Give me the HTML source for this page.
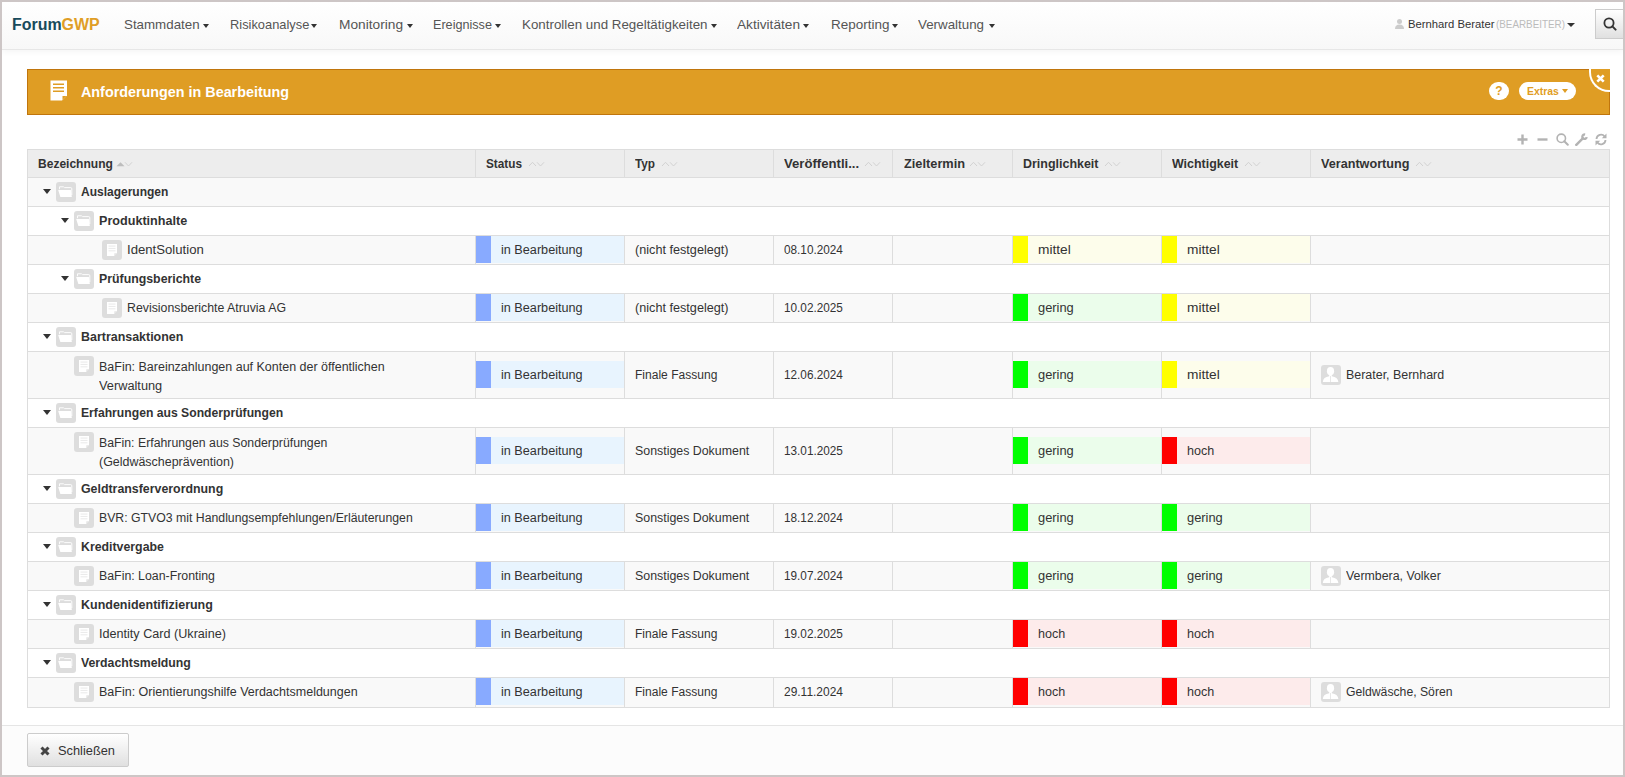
<!DOCTYPE html>
<html><head><meta charset="utf-8">
<style>
*{box-sizing:border-box}
html,body{margin:0;padding:0}
body{width:1625px;height:777px;overflow:hidden;background:#cdc6c6;font-family:"Liberation Sans",sans-serif;color:#333;position:relative}
.win{position:absolute;left:2px;top:2px;width:1621px;height:773px;background:#fff;overflow:hidden}
.abs{position:absolute}
.txt,.mn,.hd{position:absolute;white-space:nowrap;transform-origin:0 0}
.txt{font-size:12px;line-height:19px;color:#333}
.hd{font-size:12px;line-height:19px;color:#333;font-weight:bold}
.mn{font-size:12.7px;line-height:16px;color:#555}
.ibox{position:absolute;width:20px;height:20px;background:#ddd;border-radius:3px}
.tri{position:absolute;width:0;height:0;border-top:5px solid #333;border-left:4px solid transparent;border-right:4px solid transparent}
</style></head><body><div class="win">

<div class="abs" style="left:0;top:0;width:1621px;height:48px;background:linear-gradient(#fff,#f8f8f8);border-bottom:1px solid #e7e7e7;box-shadow:0 2px 6px rgba(0,0,0,.045)"></div>
<div id="t1" class="txt" style="left:10px;top:12.5px;transform:scaleX(0.9495);font-size:16.8px;line-height:20px;font-weight:bold"><span style="color:#184a5b">Forum</span><span style="color:#e09e26">GWP</span></div>
<div id="t2" class="mn" style="left:121.9px;top:15px;transform:scaleX(1.0507);">Stammdaten</div>
<div class="abs" style="left:201px;top:22px;width:0;height:0;border-top:4px solid #333;border-left:3.5px solid transparent;border-right:3.5px solid transparent"></div>
<div id="t3" class="mn" style="left:227.9px;top:15px;transform:scaleX(1.0130);">Risikoanalyse</div>
<div class="abs" style="left:309px;top:22px;width:0;height:0;border-top:4px solid #333;border-left:3.5px solid transparent;border-right:3.5px solid transparent"></div>
<div id="t4" class="mn" style="left:337.3px;top:15px;transform:scaleX(1.0810);">Monitoring</div>
<div class="abs" style="left:405px;top:22px;width:0;height:0;border-top:4px solid #333;border-left:3.5px solid transparent;border-right:3.5px solid transparent"></div>
<div id="t5" class="mn" style="left:431.4px;top:15px;transform:scaleX(0.9948);">Ereignisse</div>
<div class="abs" style="left:493px;top:22px;width:0;height:0;border-top:4px solid #333;border-left:3.5px solid transparent;border-right:3.5px solid transparent"></div>
<div id="t6" class="mn" style="left:520.4px;top:15px;transform:scaleX(1.0520);">Kontrollen und Regeltätigkeiten</div>
<div class="abs" style="left:709px;top:22px;width:0;height:0;border-top:4px solid #333;border-left:3.5px solid transparent;border-right:3.5px solid transparent"></div>
<div id="t7" class="mn" style="left:735.3px;top:15px;transform:scaleX(1.0759);">Aktivitäten</div>
<div class="abs" style="left:801px;top:22px;width:0;height:0;border-top:4px solid #333;border-left:3.5px solid transparent;border-right:3.5px solid transparent"></div>
<div id="t8" class="mn" style="left:828.7px;top:15px;transform:scaleX(1.0611);">Reporting</div>
<div class="abs" style="left:890px;top:22px;width:0;height:0;border-top:4px solid #333;border-left:3.5px solid transparent;border-right:3.5px solid transparent"></div>
<div id="t9" class="mn" style="left:916.3px;top:15px;transform:scaleX(1.0508);">Verwaltung</div>
<div class="abs" style="left:987px;top:22px;width:0;height:0;border-top:4px solid #333;border-left:3.5px solid transparent;border-right:3.5px solid transparent"></div>
<svg class="abs" style="left:1393px;top:17px" width="9" height="10" viewBox="0 0 9 10"><circle cx="4.5" cy="2.6" r="2.5" fill="#ccc"/><path d="M0 10 Q0 5.5 4.5 5.5 Q9 5.5 9 10 Z" fill="#ccc"/></svg>
<div id="t10" class="txt" style="left:1405.5px;top:14px;transform:scaleX(1.0071);font-size:11.2px;line-height:16px">Bernhard Berater</div>
<div id="t11" class="txt" style="left:1493.5px;top:14px;transform:scaleX(0.8810);font-size:11.2px;line-height:16px;color:#bbb">(BEARBEITER)</div>
<div class="abs" style="left:1565px;top:21px;width:0;height:0;border-top:4px solid #333;border-left:4.0px solid transparent;border-right:4.0px solid transparent"></div>
<div class="abs" style="left:1593px;top:7px;width:34px;height:30px;border:1px solid #ccc;border-radius:0;background:linear-gradient(#fff,#e0e0e0)"><svg style="position:absolute;left:7px;top:7px" width="14" height="14" viewBox="0 0 14 14"><circle cx="6" cy="6" r="4.6" stroke="#333" stroke-width="1.8" fill="none"/><path d="M9.4 9.4 L12.6 12.6" stroke="#333" stroke-width="2" stroke-linecap="round"/></svg></div>
<div class="abs" style="left:25px;top:67px;width:1583px;height:46px;background:#df9d24;border:1px solid #c0750c"></div>
<svg class="abs" style="left:48px;top:78px" width="18" height="21" viewBox="0 0 18 21"><path d="M0.5 0.5 H17 V15.5 L12 20.5 H0.5 Z" fill="#fff"/><rect x="3" y="3.5" width="11" height="1.5" fill="#df9d24"/><rect x="3" y="7" width="11" height="1.5" fill="#df9d24"/><rect x="3" y="10.5" width="11" height="1.5" fill="#df9d24"/><path d="M12.5 20 L12.5 16 L16.5 16 Z" fill="#df9d24"/></svg>
<div id="t12" class="txt" style="left:79px;top:81px;transform:scaleX(0.9562);font-size:15px;line-height:18px;font-weight:bold;color:#fff">Anforderungen in Bearbeitung</div>
<div class="abs" style="left:1487px;top:80px;width:20px;height:18px;border-radius:10px;background:#fff;color:#df9d24;font-weight:bold;font-size:12px;line-height:18px;text-align:center">?</div>
<div class="abs" style="left:1517px;top:80px;width:57px;height:18px;border-radius:9px;background:#fff"></div>
<div id="t13" class="txt" style="left:1525px;top:80px;transform:scaleX(0.8973);font-size:11.6px;line-height:18px;font-weight:bold;color:#df9d24">Extras</div>
<div class="abs" style="left:1560px;top:87px;width:0;height:0;border-top:4px solid #df9d24;border-left:3.5px solid transparent;border-right:3.5px solid transparent"></div>
<div class="abs" style="left:1587px;top:67px;width:21px;height:23px;background:#df9d24;border-left:2px solid #fff;border-bottom:2px solid #fff;border-bottom-left-radius:20px"><svg style="position:absolute;left:5.3px;top:4.5px" width="9" height="9" viewBox="0 0 9 9"><path d="M1.3 1.3 L7.7 7.7 M7.7 1.3 L1.3 7.7" stroke="#fff" stroke-width="2.6"/></svg></div>
<svg class="abs" style="left:1515px;top:132px" width="11" height="11" viewBox="0 0 11 11"><path d="M5.5 0.5 V10.5 M0.5 5.5 H10.5" stroke="#b3b3b3" stroke-width="2.4"/></svg>
<svg class="abs" style="left:1535px;top:132px" width="11" height="11" viewBox="0 0 11 11"><path d="M0.5 5.5 H10.5" stroke="#b3b3b3" stroke-width="2.4"/></svg>
<svg class="abs" style="left:1554px;top:131px" width="13" height="13" viewBox="0 0 13 13"><circle cx="5.3" cy="5.3" r="4.2" stroke="#b3b3b3" stroke-width="1.6" fill="none"/><path d="M8.3 8.3 L11.8 11.8" stroke="#b3b3b3" stroke-width="2" stroke-linecap="round"/></svg>
<svg class="abs" style="left:1573px;top:131px" width="13" height="13" viewBox="0 0 13 13"><path d="M7.8 5.3 L1.3 11.8" stroke="#b3b3b3" stroke-width="2.5" stroke-linecap="round"/><path d="M11.7 4.1 A2.2 2.2 0 1 1 10.1 1.6" stroke="#b3b3b3" stroke-width="2.3" fill="none"/></svg>
<svg class="abs" style="left:1593px;top:131px" width="12" height="13" viewBox="0 0 12 13"><path d="M1.5 6 A4.5 4.5 0 0 1 9.6 3.5" stroke="#b3b3b3" stroke-width="1.8" fill="none"/><path d="M11.5 0.5 V5.2 H6.8 Z" fill="#b3b3b3"/><path d="M10.5 7 A4.5 4.5 0 0 1 2.4 9.5" stroke="#b3b3b3" stroke-width="1.8" fill="none"/><path d="M0.5 12.5 V7.8 H5.2 Z" fill="#b3b3b3"/></svg>
<div class="abs" style="left:25px;top:147px;width:1583px;height:559px;border:1px solid #ddd;background:#fff"></div>
<div class="abs" style="left:26px;top:148px;width:1581px;height:28px;background:#ededed;border-bottom:1px solid #ddd"></div>
<div id="t14" class="hd" style="left:36.3px;top:153px;transform:scaleX(1.0027);">Bezeichnung</div>
<svg class="abs" style="left:114.3px;top:158.5px" width="17" height="6" viewBox="0 0 17 6"><path d="M0.5 5.3 L4.5 1.2 L8.5 5.3 Z" fill="#bdbdbd"/><path d="M9 1.3 L12.5 5 L16 1.3" stroke="#d2d2d2" stroke-width="1" fill="none"/></svg>
<div id="t15" class="hd" style="left:484.2px;top:153px;transform:scaleX(0.9811);">Status</div>
<svg class="abs" style="left:525.5px;top:158.5px" width="17" height="6" viewBox="0 0 17 6"><path d="M1 5 L4.5 1.3 L8 5" stroke="#d2d2d2" stroke-width="1" fill="none"/><path d="M9 1.3 L12.5 5 L16 1.3" stroke="#d2d2d2" stroke-width="1" fill="none"/></svg>
<div class="abs" style="left:473px;top:148px;width:1px;height:27px;background:#ddd"></div>
<div id="t16" class="hd" style="left:633.4px;top:153px;transform:scaleX(0.9810);">Typ</div>
<svg class="abs" style="left:659.0px;top:158.5px" width="17" height="6" viewBox="0 0 17 6"><path d="M1 5 L4.5 1.3 L8 5" stroke="#d2d2d2" stroke-width="1" fill="none"/><path d="M9 1.3 L12.5 5 L16 1.3" stroke="#d2d2d2" stroke-width="1" fill="none"/></svg>
<div class="abs" style="left:622px;top:148px;width:1px;height:27px;background:#ddd"></div>
<div id="t17" class="hd" style="left:781.7px;top:153px;transform:scaleX(1.0942);">Veröffentli...</div>
<svg class="abs" style="left:862.2px;top:158.5px" width="17" height="6" viewBox="0 0 17 6"><path d="M1 5 L4.5 1.3 L8 5" stroke="#d2d2d2" stroke-width="1" fill="none"/><path d="M9 1.3 L12.5 5 L16 1.3" stroke="#d2d2d2" stroke-width="1" fill="none"/></svg>
<div class="abs" style="left:771px;top:148px;width:1px;height:27px;background:#ddd"></div>
<div id="t18" class="hd" style="left:901.7px;top:153px;transform:scaleX(1.0649);">Zieltermin</div>
<svg class="abs" style="left:967.4px;top:158.5px" width="17" height="6" viewBox="0 0 17 6"><path d="M1 5 L4.5 1.3 L8 5" stroke="#d2d2d2" stroke-width="1" fill="none"/><path d="M9 1.3 L12.5 5 L16 1.3" stroke="#d2d2d2" stroke-width="1" fill="none"/></svg>
<div class="abs" style="left:890px;top:148px;width:1px;height:27px;background:#ddd"></div>
<div id="t19" class="hd" style="left:1021px;top:153px;transform:scaleX(1.0384);">Dringlichkeit</div>
<svg class="abs" style="left:1101.8px;top:158.5px" width="17" height="6" viewBox="0 0 17 6"><path d="M1 5 L4.5 1.3 L8 5" stroke="#d2d2d2" stroke-width="1" fill="none"/><path d="M9 1.3 L12.5 5 L16 1.3" stroke="#d2d2d2" stroke-width="1" fill="none"/></svg>
<div class="abs" style="left:1010px;top:148px;width:1px;height:27px;background:#ddd"></div>
<div id="t20" class="hd" style="left:1170.2px;top:153px;transform:scaleX(1.0359);">Wichtigkeit</div>
<svg class="abs" style="left:1241.5px;top:158.5px" width="17" height="6" viewBox="0 0 17 6"><path d="M1 5 L4.5 1.3 L8 5" stroke="#d2d2d2" stroke-width="1" fill="none"/><path d="M9 1.3 L12.5 5 L16 1.3" stroke="#d2d2d2" stroke-width="1" fill="none"/></svg>
<div class="abs" style="left:1159px;top:148px;width:1px;height:27px;background:#ddd"></div>
<div id="t21" class="hd" style="left:1319.2px;top:153px;transform:scaleX(1.0524);">Verantwortung</div>
<svg class="abs" style="left:1412.6px;top:158.5px" width="17" height="6" viewBox="0 0 17 6"><path d="M1 5 L4.5 1.3 L8 5" stroke="#d2d2d2" stroke-width="1" fill="none"/><path d="M9 1.3 L12.5 5 L16 1.3" stroke="#d2d2d2" stroke-width="1" fill="none"/></svg>
<div class="abs" style="left:1308px;top:148px;width:1px;height:27px;background:#ddd"></div>
<div class="abs" style="left:26px;top:176px;width:1581px;height:29px;background:#f9f9f9;border-bottom:1px solid #ddd"></div>
<div class="tri" style="left:41.2px;top:187px"></div>
<div class="ibox" style="left:54px;top:180px"><svg style="position:absolute;left:2px;top:4px" width="16" height="12" viewBox="0 0 16 12"><path d="M1.5 3.2 V0.8 H5.5 L6.5 1.6 H12.8 Q13.8 1.6 13.8 2.8 V9" stroke="#fff" stroke-width="0.9" fill="none"/><path d="M0.2 4 H12.9 L13.8 11 H2.4 Z" fill="#fff"/></svg></div>
<div id="t22" class="hd" style="left:79px;top:181px;">Auslagerungen</div>
<div class="abs" style="left:26px;top:205px;width:1581px;height:29px;background:#fff;border-bottom:1px solid #ddd"></div>
<div class="tri" style="left:59.2px;top:216px"></div>
<div class="ibox" style="left:72px;top:209px"><svg style="position:absolute;left:2px;top:4px" width="16" height="12" viewBox="0 0 16 12"><path d="M1.5 3.2 V0.8 H5.5 L6.5 1.6 H12.8 Q13.8 1.6 13.8 2.8 V9" stroke="#fff" stroke-width="0.9" fill="none"/><path d="M0.2 4 H12.9 L13.8 11 H2.4 Z" fill="#fff"/></svg></div>
<div id="t23" class="hd" style="left:97px;top:210px;transform:scaleX(1.0500);">Produktinhalte</div>
<div class="abs" style="left:26px;top:234px;width:1581px;height:29px;background:#f9f9f9;border-bottom:1px solid #ddd"></div>
<div class="ibox" style="left:100px;top:238px"><svg style="position:absolute;left:5px;top:4px" width="10" height="12" viewBox="0 0 10 12"><path d="M0 0 H10 V9 L7 12 H0 Z" fill="#fff"/><rect x="1.5" y="1.6" width="7" height="0.9" fill="#e6e6e6"/><rect x="1.5" y="3.9" width="7" height="0.9" fill="#e6e6e6"/><rect x="1.5" y="6.4" width="7" height="0.9" fill="#e6e6e6"/><path d="M7.3 12 L7.3 9.2 L10 9.2 Z" fill="#e4e4e4"/></svg></div>
<div id="t24" class="txt" style="left:125px;top:239px;transform:scaleX(1.0957);">IdentSolution</div>
<div class="abs" style="left:473px;top:234px;width:1px;height:28px;background:#ddd"></div>
<div class="abs" style="left:622px;top:234px;width:1px;height:28px;background:#ddd"></div>
<div class="abs" style="left:771px;top:234px;width:1px;height:28px;background:#ddd"></div>
<div class="abs" style="left:890px;top:234px;width:1px;height:28px;background:#ddd"></div>
<div class="abs" style="left:1010px;top:234px;width:1px;height:28px;background:#ddd"></div>
<div class="abs" style="left:1159px;top:234px;width:1px;height:28px;background:#ddd"></div>
<div class="abs" style="left:1308px;top:234px;width:1px;height:28px;background:#ddd"></div>
<div class="abs" style="left:474px;top:234px;width:148px;height:27px;background:#e8f4fe"></div>
<div class="abs" style="left:474px;top:234px;width:15px;height:27px;background:#88aaff"></div>
<div id="t25" class="txt" style="left:499px;top:239px;transform:scaleX(1.0545);">in Bearbeitung</div>
<div id="t26" class="txt" style="left:632.5px;top:239px;transform:scaleX(1.0545);">(nicht festgelegt)</div>
<div id="t27" class="txt" style="left:781.8px;top:239px;transform:scaleX(0.9800);">08.10.2024</div>
<div class="abs" style="left:1011px;top:234px;width:148px;height:27px;background:#fdfdeb"></div>
<div class="abs" style="left:1011px;top:234px;width:15px;height:27px;background:#ffff00"></div>
<div id="t28" class="txt" style="left:1036px;top:239px;transform:scaleX(1.1429);">mittel</div>
<div class="abs" style="left:1160px;top:234px;width:148px;height:27px;background:#fdfdeb"></div>
<div class="abs" style="left:1160px;top:234px;width:15px;height:27px;background:#ffff00"></div>
<div id="t29" class="txt" style="left:1185px;top:239px;transform:scaleX(1.1429);">mittel</div>
<div class="abs" style="left:26px;top:263px;width:1581px;height:29px;background:#fff;border-bottom:1px solid #ddd"></div>
<div class="tri" style="left:59.2px;top:274px"></div>
<div class="ibox" style="left:72px;top:267px"><svg style="position:absolute;left:2px;top:4px" width="16" height="12" viewBox="0 0 16 12"><path d="M1.5 3.2 V0.8 H5.5 L6.5 1.6 H12.8 Q13.8 1.6 13.8 2.8 V9" stroke="#fff" stroke-width="0.9" fill="none"/><path d="M0.2 4 H12.9 L13.8 11 H2.4 Z" fill="#fff"/></svg></div>
<div id="t30" class="hd" style="left:97px;top:268px;transform:scaleX(1.0273);">Prüfungsberichte</div>
<div class="abs" style="left:26px;top:292px;width:1581px;height:29px;background:#f9f9f9;border-bottom:1px solid #ddd"></div>
<div class="ibox" style="left:100px;top:296px"><svg style="position:absolute;left:5px;top:4px" width="10" height="12" viewBox="0 0 10 12"><path d="M0 0 H10 V9 L7 12 H0 Z" fill="#fff"/><rect x="1.5" y="1.6" width="7" height="0.9" fill="#e6e6e6"/><rect x="1.5" y="3.9" width="7" height="0.9" fill="#e6e6e6"/><rect x="1.5" y="6.4" width="7" height="0.9" fill="#e6e6e6"/><path d="M7.3 12 L7.3 9.2 L10 9.2 Z" fill="#e4e4e4"/></svg></div>
<div id="t31" class="txt" style="left:125px;top:297px;transform:scaleX(1.0273);">Revisionsberichte Atruvia AG</div>
<div class="abs" style="left:473px;top:292px;width:1px;height:28px;background:#ddd"></div>
<div class="abs" style="left:622px;top:292px;width:1px;height:28px;background:#ddd"></div>
<div class="abs" style="left:771px;top:292px;width:1px;height:28px;background:#ddd"></div>
<div class="abs" style="left:890px;top:292px;width:1px;height:28px;background:#ddd"></div>
<div class="abs" style="left:1010px;top:292px;width:1px;height:28px;background:#ddd"></div>
<div class="abs" style="left:1159px;top:292px;width:1px;height:28px;background:#ddd"></div>
<div class="abs" style="left:1308px;top:292px;width:1px;height:28px;background:#ddd"></div>
<div class="abs" style="left:474px;top:292px;width:148px;height:27px;background:#e8f4fe"></div>
<div class="abs" style="left:474px;top:292px;width:15px;height:27px;background:#88aaff"></div>
<div id="t32" class="txt" style="left:499px;top:297px;transform:scaleX(1.0545);">in Bearbeitung</div>
<div id="t33" class="txt" style="left:632.5px;top:297px;transform:scaleX(1.0545);">(nicht festgelegt)</div>
<div id="t34" class="txt" style="left:781.8px;top:297px;transform:scaleX(0.9800);">10.02.2025</div>
<div class="abs" style="left:1011px;top:292px;width:148px;height:27px;background:#ebfdeb"></div>
<div class="abs" style="left:1011px;top:292px;width:15px;height:27px;background:#00ff00"></div>
<div id="t35" class="txt" style="left:1036px;top:297px;transform:scaleX(1.0727);">gering</div>
<div class="abs" style="left:1160px;top:292px;width:148px;height:27px;background:#fdfdeb"></div>
<div class="abs" style="left:1160px;top:292px;width:15px;height:27px;background:#ffff00"></div>
<div id="t36" class="txt" style="left:1185px;top:297px;transform:scaleX(1.1429);">mittel</div>
<div class="abs" style="left:26px;top:321px;width:1581px;height:29px;background:#fff;border-bottom:1px solid #ddd"></div>
<div class="tri" style="left:41.2px;top:332px"></div>
<div class="ibox" style="left:54px;top:325px"><svg style="position:absolute;left:2px;top:4px" width="16" height="12" viewBox="0 0 16 12"><path d="M1.5 3.2 V0.8 H5.5 L6.5 1.6 H12.8 Q13.8 1.6 13.8 2.8 V9" stroke="#fff" stroke-width="0.9" fill="none"/><path d="M0.2 4 H12.9 L13.8 11 H2.4 Z" fill="#fff"/></svg></div>
<div id="t37" class="hd" style="left:79px;top:326px;transform:scaleX(1.0367);">Bartransaktionen</div>
<div class="abs" style="left:26px;top:350px;width:1581px;height:47px;background:#f9f9f9;border-bottom:1px solid #ddd"></div>
<div class="ibox" style="left:72px;top:354px"><svg style="position:absolute;left:5px;top:4px" width="10" height="12" viewBox="0 0 10 12"><path d="M0 0 H10 V9 L7 12 H0 Z" fill="#fff"/><rect x="1.5" y="1.6" width="7" height="0.9" fill="#e6e6e6"/><rect x="1.5" y="3.9" width="7" height="0.9" fill="#e6e6e6"/><rect x="1.5" y="6.4" width="7" height="0.9" fill="#e6e6e6"/><path d="M7.3 12 L7.3 9.2 L10 9.2 Z" fill="#e4e4e4"/></svg></div>
<div id="t38" class="txt" style="left:97px;top:356px;transform:scaleX(1.0401);">BaFin: Bareinzahlungen auf Konten der öffentlichen</div>
<div id="t39" class="txt" style="left:97px;top:375px;transform:scaleX(1.0644);">Verwaltung</div>
<div class="abs" style="left:473px;top:350px;width:1px;height:46px;background:#ddd"></div>
<div class="abs" style="left:622px;top:350px;width:1px;height:46px;background:#ddd"></div>
<div class="abs" style="left:771px;top:350px;width:1px;height:46px;background:#ddd"></div>
<div class="abs" style="left:890px;top:350px;width:1px;height:46px;background:#ddd"></div>
<div class="abs" style="left:1010px;top:350px;width:1px;height:46px;background:#ddd"></div>
<div class="abs" style="left:1159px;top:350px;width:1px;height:46px;background:#ddd"></div>
<div class="abs" style="left:1308px;top:350px;width:1px;height:46px;background:#ddd"></div>
<div class="abs" style="left:474px;top:359px;width:148px;height:27px;background:#e8f4fe"></div>
<div class="abs" style="left:474px;top:359px;width:15px;height:27px;background:#88aaff"></div>
<div id="t40" class="txt" style="left:499px;top:364px;transform:scaleX(1.0545);">in Bearbeitung</div>
<div id="t41" class="txt" style="left:632.5px;top:364px;transform:scaleX(1.0037);">Finale Fassung</div>
<div id="t42" class="txt" style="left:781.8px;top:364px;transform:scaleX(0.9800);">12.06.2024</div>
<div class="abs" style="left:1011px;top:359px;width:148px;height:27px;background:#ebfdeb"></div>
<div class="abs" style="left:1011px;top:359px;width:15px;height:27px;background:#00ff00"></div>
<div id="t43" class="txt" style="left:1036px;top:364px;transform:scaleX(1.0727);">gering</div>
<div class="abs" style="left:1160px;top:359px;width:148px;height:27px;background:#fdfdeb"></div>
<div class="abs" style="left:1160px;top:359px;width:15px;height:27px;background:#ffff00"></div>
<div id="t44" class="txt" style="left:1185px;top:364px;transform:scaleX(1.1429);">mittel</div>
<div class="ibox" style="left:1319px;top:363px"><svg style="position:absolute;left:0;top:0" width="20" height="20" viewBox="0 0 20 20"><ellipse cx="9.5" cy="6.2" rx="3.6" ry="4.1" fill="#fff"/><path d="M8.2 9.5 H10.8 V11.2 Q16.8 12 17.4 17 H1.8 Q2.2 12 8.2 11.2 Z" fill="#fff"/><path d="M9.5 11 V17" stroke="#e2e2e2" stroke-width="0.8"/></svg></div>
<div id="t45" class="txt" style="left:1344px;top:364px;transform:scaleX(1.0362);">Berater, Bernhard</div>
<div class="abs" style="left:26px;top:397px;width:1581px;height:29px;background:#fff;border-bottom:1px solid #ddd"></div>
<div class="tri" style="left:41.2px;top:408px"></div>
<div class="ibox" style="left:54px;top:401px"><svg style="position:absolute;left:2px;top:4px" width="16" height="12" viewBox="0 0 16 12"><path d="M1.5 3.2 V0.8 H5.5 L6.5 1.6 H12.8 Q13.8 1.6 13.8 2.8 V9" stroke="#fff" stroke-width="0.9" fill="none"/><path d="M0.2 4 H12.9 L13.8 11 H2.4 Z" fill="#fff"/></svg></div>
<div id="t46" class="hd" style="left:79px;top:402px;transform:scaleX(1.0141);">Erfahrungen aus Sonderprüfungen</div>
<div class="abs" style="left:26px;top:426px;width:1581px;height:47px;background:#f9f9f9;border-bottom:1px solid #ddd"></div>
<div class="ibox" style="left:72px;top:430px"><svg style="position:absolute;left:5px;top:4px" width="10" height="12" viewBox="0 0 10 12"><path d="M0 0 H10 V9 L7 12 H0 Z" fill="#fff"/><rect x="1.5" y="1.6" width="7" height="0.9" fill="#e6e6e6"/><rect x="1.5" y="3.9" width="7" height="0.9" fill="#e6e6e6"/><rect x="1.5" y="6.4" width="7" height="0.9" fill="#e6e6e6"/><path d="M7.3 12 L7.3 9.2 L10 9.2 Z" fill="#e4e4e4"/></svg></div>
<div id="t47" class="txt" style="left:97px;top:432px;transform:scaleX(1.0247);">BaFin: Erfahrungen aus Sonderprüfungen</div>
<div id="t48" class="txt" style="left:97px;top:451px;transform:scaleX(1.0377);">(Geldwäscheprävention)</div>
<div class="abs" style="left:473px;top:426px;width:1px;height:46px;background:#ddd"></div>
<div class="abs" style="left:622px;top:426px;width:1px;height:46px;background:#ddd"></div>
<div class="abs" style="left:771px;top:426px;width:1px;height:46px;background:#ddd"></div>
<div class="abs" style="left:890px;top:426px;width:1px;height:46px;background:#ddd"></div>
<div class="abs" style="left:1010px;top:426px;width:1px;height:46px;background:#ddd"></div>
<div class="abs" style="left:1159px;top:426px;width:1px;height:46px;background:#ddd"></div>
<div class="abs" style="left:1308px;top:426px;width:1px;height:46px;background:#ddd"></div>
<div class="abs" style="left:474px;top:435px;width:148px;height:27px;background:#e8f4fe"></div>
<div class="abs" style="left:474px;top:435px;width:15px;height:27px;background:#88aaff"></div>
<div id="t49" class="txt" style="left:499px;top:440px;transform:scaleX(1.0545);">in Bearbeitung</div>
<div id="t50" class="txt" style="left:632.5px;top:440px;transform:scaleX(1.0315);">Sonstiges Dokument</div>
<div id="t51" class="txt" style="left:781.8px;top:440px;transform:scaleX(0.9800);">13.01.2025</div>
<div class="abs" style="left:1011px;top:435px;width:148px;height:27px;background:#ebfdeb"></div>
<div class="abs" style="left:1011px;top:435px;width:15px;height:27px;background:#00ff00"></div>
<div id="t52" class="txt" style="left:1036px;top:440px;transform:scaleX(1.0727);">gering</div>
<div class="abs" style="left:1160px;top:435px;width:148px;height:27px;background:#fdebeb"></div>
<div class="abs" style="left:1160px;top:435px;width:15px;height:27px;background:#ff0000"></div>
<div id="t53" class="txt" style="left:1185px;top:440px;transform:scaleX(1.0462);">hoch</div>
<div class="abs" style="left:26px;top:473px;width:1581px;height:29px;background:#fff;border-bottom:1px solid #ddd"></div>
<div class="tri" style="left:41.2px;top:484px"></div>
<div class="ibox" style="left:54px;top:477px"><svg style="position:absolute;left:2px;top:4px" width="16" height="12" viewBox="0 0 16 12"><path d="M1.5 3.2 V0.8 H5.5 L6.5 1.6 H12.8 Q13.8 1.6 13.8 2.8 V9" stroke="#fff" stroke-width="0.9" fill="none"/><path d="M0.2 4 H12.9 L13.8 11 H2.4 Z" fill="#fff"/></svg></div>
<div id="t54" class="hd" style="left:79px;top:478px;transform:scaleX(1.0304);">Geldtransferverordnung</div>
<div class="abs" style="left:26px;top:502px;width:1581px;height:29px;background:#f9f9f9;border-bottom:1px solid #ddd"></div>
<div class="ibox" style="left:72px;top:506px"><svg style="position:absolute;left:5px;top:4px" width="10" height="12" viewBox="0 0 10 12"><path d="M0 0 H10 V9 L7 12 H0 Z" fill="#fff"/><rect x="1.5" y="1.6" width="7" height="0.9" fill="#e6e6e6"/><rect x="1.5" y="3.9" width="7" height="0.9" fill="#e6e6e6"/><rect x="1.5" y="6.4" width="7" height="0.9" fill="#e6e6e6"/><path d="M7.3 12 L7.3 9.2 L10 9.2 Z" fill="#e4e4e4"/></svg></div>
<div id="t55" class="txt" style="left:97px;top:507px;transform:scaleX(1.0225);">BVR: GTVO3 mit Handlungsempfehlungen/Erläuterungen</div>
<div class="abs" style="left:473px;top:502px;width:1px;height:28px;background:#ddd"></div>
<div class="abs" style="left:622px;top:502px;width:1px;height:28px;background:#ddd"></div>
<div class="abs" style="left:771px;top:502px;width:1px;height:28px;background:#ddd"></div>
<div class="abs" style="left:890px;top:502px;width:1px;height:28px;background:#ddd"></div>
<div class="abs" style="left:1010px;top:502px;width:1px;height:28px;background:#ddd"></div>
<div class="abs" style="left:1159px;top:502px;width:1px;height:28px;background:#ddd"></div>
<div class="abs" style="left:1308px;top:502px;width:1px;height:28px;background:#ddd"></div>
<div class="abs" style="left:474px;top:502px;width:148px;height:27px;background:#e8f4fe"></div>
<div class="abs" style="left:474px;top:502px;width:15px;height:27px;background:#88aaff"></div>
<div id="t56" class="txt" style="left:499px;top:507px;transform:scaleX(1.0545);">in Bearbeitung</div>
<div id="t57" class="txt" style="left:632.5px;top:507px;transform:scaleX(1.0315);">Sonstiges Dokument</div>
<div id="t58" class="txt" style="left:781.8px;top:507px;transform:scaleX(0.9800);">18.12.2024</div>
<div class="abs" style="left:1011px;top:502px;width:148px;height:27px;background:#ebfdeb"></div>
<div class="abs" style="left:1011px;top:502px;width:15px;height:27px;background:#00ff00"></div>
<div id="t59" class="txt" style="left:1036px;top:507px;transform:scaleX(1.0727);">gering</div>
<div class="abs" style="left:1160px;top:502px;width:148px;height:27px;background:#ebfdeb"></div>
<div class="abs" style="left:1160px;top:502px;width:15px;height:27px;background:#00ff00"></div>
<div id="t60" class="txt" style="left:1185px;top:507px;transform:scaleX(1.0727);">gering</div>
<div class="abs" style="left:26px;top:531px;width:1581px;height:29px;background:#fff;border-bottom:1px solid #ddd"></div>
<div class="tri" style="left:41.2px;top:542px"></div>
<div class="ibox" style="left:54px;top:535px"><svg style="position:absolute;left:2px;top:4px" width="16" height="12" viewBox="0 0 16 12"><path d="M1.5 3.2 V0.8 H5.5 L6.5 1.6 H12.8 Q13.8 1.6 13.8 2.8 V9" stroke="#fff" stroke-width="0.9" fill="none"/><path d="M0.2 4 H12.9 L13.8 11 H2.4 Z" fill="#fff"/></svg></div>
<div id="t61" class="hd" style="left:79px;top:536px;transform:scaleX(1.0272);">Kreditvergabe</div>
<div class="abs" style="left:26px;top:560px;width:1581px;height:29px;background:#f9f9f9;border-bottom:1px solid #ddd"></div>
<div class="ibox" style="left:72px;top:564px"><svg style="position:absolute;left:5px;top:4px" width="10" height="12" viewBox="0 0 10 12"><path d="M0 0 H10 V9 L7 12 H0 Z" fill="#fff"/><rect x="1.5" y="1.6" width="7" height="0.9" fill="#e6e6e6"/><rect x="1.5" y="3.9" width="7" height="0.9" fill="#e6e6e6"/><rect x="1.5" y="6.4" width="7" height="0.9" fill="#e6e6e6"/><path d="M7.3 12 L7.3 9.2 L10 9.2 Z" fill="#e4e4e4"/></svg></div>
<div id="t62" class="txt" style="left:97px;top:565px;transform:scaleX(1.0286);">BaFin: Loan-Fronting</div>
<div class="abs" style="left:473px;top:560px;width:1px;height:28px;background:#ddd"></div>
<div class="abs" style="left:622px;top:560px;width:1px;height:28px;background:#ddd"></div>
<div class="abs" style="left:771px;top:560px;width:1px;height:28px;background:#ddd"></div>
<div class="abs" style="left:890px;top:560px;width:1px;height:28px;background:#ddd"></div>
<div class="abs" style="left:1010px;top:560px;width:1px;height:28px;background:#ddd"></div>
<div class="abs" style="left:1159px;top:560px;width:1px;height:28px;background:#ddd"></div>
<div class="abs" style="left:1308px;top:560px;width:1px;height:28px;background:#ddd"></div>
<div class="abs" style="left:474px;top:560px;width:148px;height:27px;background:#e8f4fe"></div>
<div class="abs" style="left:474px;top:560px;width:15px;height:27px;background:#88aaff"></div>
<div id="t63" class="txt" style="left:499px;top:565px;transform:scaleX(1.0545);">in Bearbeitung</div>
<div id="t64" class="txt" style="left:632.5px;top:565px;transform:scaleX(1.0315);">Sonstiges Dokument</div>
<div id="t65" class="txt" style="left:781.8px;top:565px;transform:scaleX(0.9800);">19.07.2024</div>
<div class="abs" style="left:1011px;top:560px;width:148px;height:27px;background:#ebfdeb"></div>
<div class="abs" style="left:1011px;top:560px;width:15px;height:27px;background:#00ff00"></div>
<div id="t66" class="txt" style="left:1036px;top:565px;transform:scaleX(1.0727);">gering</div>
<div class="abs" style="left:1160px;top:560px;width:148px;height:27px;background:#ebfdeb"></div>
<div class="abs" style="left:1160px;top:560px;width:15px;height:27px;background:#00ff00"></div>
<div id="t67" class="txt" style="left:1185px;top:565px;transform:scaleX(1.0727);">gering</div>
<div class="ibox" style="left:1319px;top:564px"><svg style="position:absolute;left:0;top:0" width="20" height="20" viewBox="0 0 20 20"><ellipse cx="9.5" cy="6.2" rx="3.6" ry="4.1" fill="#fff"/><path d="M8.2 9.5 H10.8 V11.2 Q16.8 12 17.4 17 H1.8 Q2.2 12 8.2 11.2 Z" fill="#fff"/><path d="M9.5 11 V17" stroke="#e2e2e2" stroke-width="0.8"/></svg></div>
<div id="t68" class="txt" style="left:1344px;top:565px;transform:scaleX(1.0293);">Vermbera, Volker</div>
<div class="abs" style="left:26px;top:589px;width:1581px;height:29px;background:#fff;border-bottom:1px solid #ddd"></div>
<div class="tri" style="left:41.2px;top:600px"></div>
<div class="ibox" style="left:54px;top:593px"><svg style="position:absolute;left:2px;top:4px" width="16" height="12" viewBox="0 0 16 12"><path d="M1.5 3.2 V0.8 H5.5 L6.5 1.6 H12.8 Q13.8 1.6 13.8 2.8 V9" stroke="#fff" stroke-width="0.9" fill="none"/><path d="M0.2 4 H12.9 L13.8 11 H2.4 Z" fill="#fff"/></svg></div>
<div id="t69" class="hd" style="left:79px;top:594px;transform:scaleX(1.0413);">Kundenidentifizierung</div>
<div class="abs" style="left:26px;top:618px;width:1581px;height:29px;background:#f9f9f9;border-bottom:1px solid #ddd"></div>
<div class="ibox" style="left:72px;top:622px"><svg style="position:absolute;left:5px;top:4px" width="10" height="12" viewBox="0 0 10 12"><path d="M0 0 H10 V9 L7 12 H0 Z" fill="#fff"/><rect x="1.5" y="1.6" width="7" height="0.9" fill="#e6e6e6"/><rect x="1.5" y="3.9" width="7" height="0.9" fill="#e6e6e6"/><rect x="1.5" y="6.4" width="7" height="0.9" fill="#e6e6e6"/><path d="M7.3 12 L7.3 9.2 L10 9.2 Z" fill="#e4e4e4"/></svg></div>
<div id="t70" class="txt" style="left:97px;top:623px;transform:scaleX(1.0513);">Identity Card (Ukraine)</div>
<div class="abs" style="left:473px;top:618px;width:1px;height:28px;background:#ddd"></div>
<div class="abs" style="left:622px;top:618px;width:1px;height:28px;background:#ddd"></div>
<div class="abs" style="left:771px;top:618px;width:1px;height:28px;background:#ddd"></div>
<div class="abs" style="left:890px;top:618px;width:1px;height:28px;background:#ddd"></div>
<div class="abs" style="left:1010px;top:618px;width:1px;height:28px;background:#ddd"></div>
<div class="abs" style="left:1159px;top:618px;width:1px;height:28px;background:#ddd"></div>
<div class="abs" style="left:1308px;top:618px;width:1px;height:28px;background:#ddd"></div>
<div class="abs" style="left:474px;top:618px;width:148px;height:27px;background:#e8f4fe"></div>
<div class="abs" style="left:474px;top:618px;width:15px;height:27px;background:#88aaff"></div>
<div id="t71" class="txt" style="left:499px;top:623px;transform:scaleX(1.0545);">in Bearbeitung</div>
<div id="t72" class="txt" style="left:632.5px;top:623px;transform:scaleX(1.0037);">Finale Fassung</div>
<div id="t73" class="txt" style="left:781.8px;top:623px;transform:scaleX(0.9800);">19.02.2025</div>
<div class="abs" style="left:1011px;top:618px;width:148px;height:27px;background:#fdebeb"></div>
<div class="abs" style="left:1011px;top:618px;width:15px;height:27px;background:#ff0000"></div>
<div id="t74" class="txt" style="left:1036px;top:623px;transform:scaleX(1.0462);">hoch</div>
<div class="abs" style="left:1160px;top:618px;width:148px;height:27px;background:#fdebeb"></div>
<div class="abs" style="left:1160px;top:618px;width:15px;height:27px;background:#ff0000"></div>
<div id="t75" class="txt" style="left:1185px;top:623px;transform:scaleX(1.0462);">hoch</div>
<div class="abs" style="left:26px;top:647px;width:1581px;height:29px;background:#fff;border-bottom:1px solid #ddd"></div>
<div class="tri" style="left:41.2px;top:658px"></div>
<div class="ibox" style="left:54px;top:651px"><svg style="position:absolute;left:2px;top:4px" width="16" height="12" viewBox="0 0 16 12"><path d="M1.5 3.2 V0.8 H5.5 L6.5 1.6 H12.8 Q13.8 1.6 13.8 2.8 V9" stroke="#fff" stroke-width="0.9" fill="none"/><path d="M0.2 4 H12.9 L13.8 11 H2.4 Z" fill="#fff"/></svg></div>
<div id="t76" class="hd" style="left:79px;top:652px;transform:scaleX(1.0234);">Verdachtsmeldung</div>
<div class="abs" style="left:26px;top:676px;width:1581px;height:30px;background:#f9f9f9;border-bottom:1px solid #ddd"></div>
<div class="ibox" style="left:72px;top:680px"><svg style="position:absolute;left:5px;top:4px" width="10" height="12" viewBox="0 0 10 12"><path d="M0 0 H10 V9 L7 12 H0 Z" fill="#fff"/><rect x="1.5" y="1.6" width="7" height="0.9" fill="#e6e6e6"/><rect x="1.5" y="3.9" width="7" height="0.9" fill="#e6e6e6"/><rect x="1.5" y="6.4" width="7" height="0.9" fill="#e6e6e6"/><path d="M7.3 12 L7.3 9.2 L10 9.2 Z" fill="#e4e4e4"/></svg></div>
<div id="t77" class="txt" style="left:97px;top:681px;transform:scaleX(1.0423);">BaFin: Orientierungshilfe Verdachtsmeldungen</div>
<div class="abs" style="left:473px;top:676px;width:1px;height:29px;background:#ddd"></div>
<div class="abs" style="left:622px;top:676px;width:1px;height:29px;background:#ddd"></div>
<div class="abs" style="left:771px;top:676px;width:1px;height:29px;background:#ddd"></div>
<div class="abs" style="left:890px;top:676px;width:1px;height:29px;background:#ddd"></div>
<div class="abs" style="left:1010px;top:676px;width:1px;height:29px;background:#ddd"></div>
<div class="abs" style="left:1159px;top:676px;width:1px;height:29px;background:#ddd"></div>
<div class="abs" style="left:1308px;top:676px;width:1px;height:29px;background:#ddd"></div>
<div class="abs" style="left:474px;top:676px;width:148px;height:27px;background:#e8f4fe"></div>
<div class="abs" style="left:474px;top:676px;width:15px;height:27px;background:#88aaff"></div>
<div id="t78" class="txt" style="left:499px;top:681px;transform:scaleX(1.0545);">in Bearbeitung</div>
<div id="t79" class="txt" style="left:632.5px;top:681px;transform:scaleX(1.0037);">Finale Fassung</div>
<div id="t80" class="txt" style="left:781.8px;top:681px;transform:scaleX(0.9966);">29.11.2024</div>
<div class="abs" style="left:1011px;top:676px;width:148px;height:27px;background:#fdebeb"></div>
<div class="abs" style="left:1011px;top:676px;width:15px;height:27px;background:#ff0000"></div>
<div id="t81" class="txt" style="left:1036px;top:681px;transform:scaleX(1.0462);">hoch</div>
<div class="abs" style="left:1160px;top:676px;width:148px;height:27px;background:#fdebeb"></div>
<div class="abs" style="left:1160px;top:676px;width:15px;height:27px;background:#ff0000"></div>
<div id="t82" class="txt" style="left:1185px;top:681px;transform:scaleX(1.0462);">hoch</div>
<div class="ibox" style="left:1319px;top:680px"><svg style="position:absolute;left:0;top:0" width="20" height="20" viewBox="0 0 20 20"><ellipse cx="9.5" cy="6.2" rx="3.6" ry="4.1" fill="#fff"/><path d="M8.2 9.5 H10.8 V11.2 Q16.8 12 17.4 17 H1.8 Q2.2 12 8.2 11.2 Z" fill="#fff"/><path d="M9.5 11 V17" stroke="#e2e2e2" stroke-width="0.8"/></svg></div>
<div id="t83" class="txt" style="left:1344px;top:681px;transform:scaleX(1.0173);">Geldwäsche, Sören</div>
<div class="abs" style="left:0;top:723px;width:1621px;height:50px;background:#fcfcfc;border-top:1px solid #e5e5e5"></div>
<div class="abs" style="left:25px;top:731px;width:102px;height:34px;border:1px solid #ccc;border-radius:2px;background:linear-gradient(#fff,#e0e0e0)"></div>
<svg class="abs" style="left:38px;top:744px" width="10" height="10" viewBox="0 0 10 10"><path d="M1.5 1.5 L8.5 8.5 M8.5 1.5 L1.5 8.5" stroke="#444" stroke-width="3"/></svg>
<div id="t84" class="txt" style="left:56px;top:740px;transform:scaleX(1.0179);font-size:12.6px;line-height:18px">Schließen</div>
</div></body></html>
